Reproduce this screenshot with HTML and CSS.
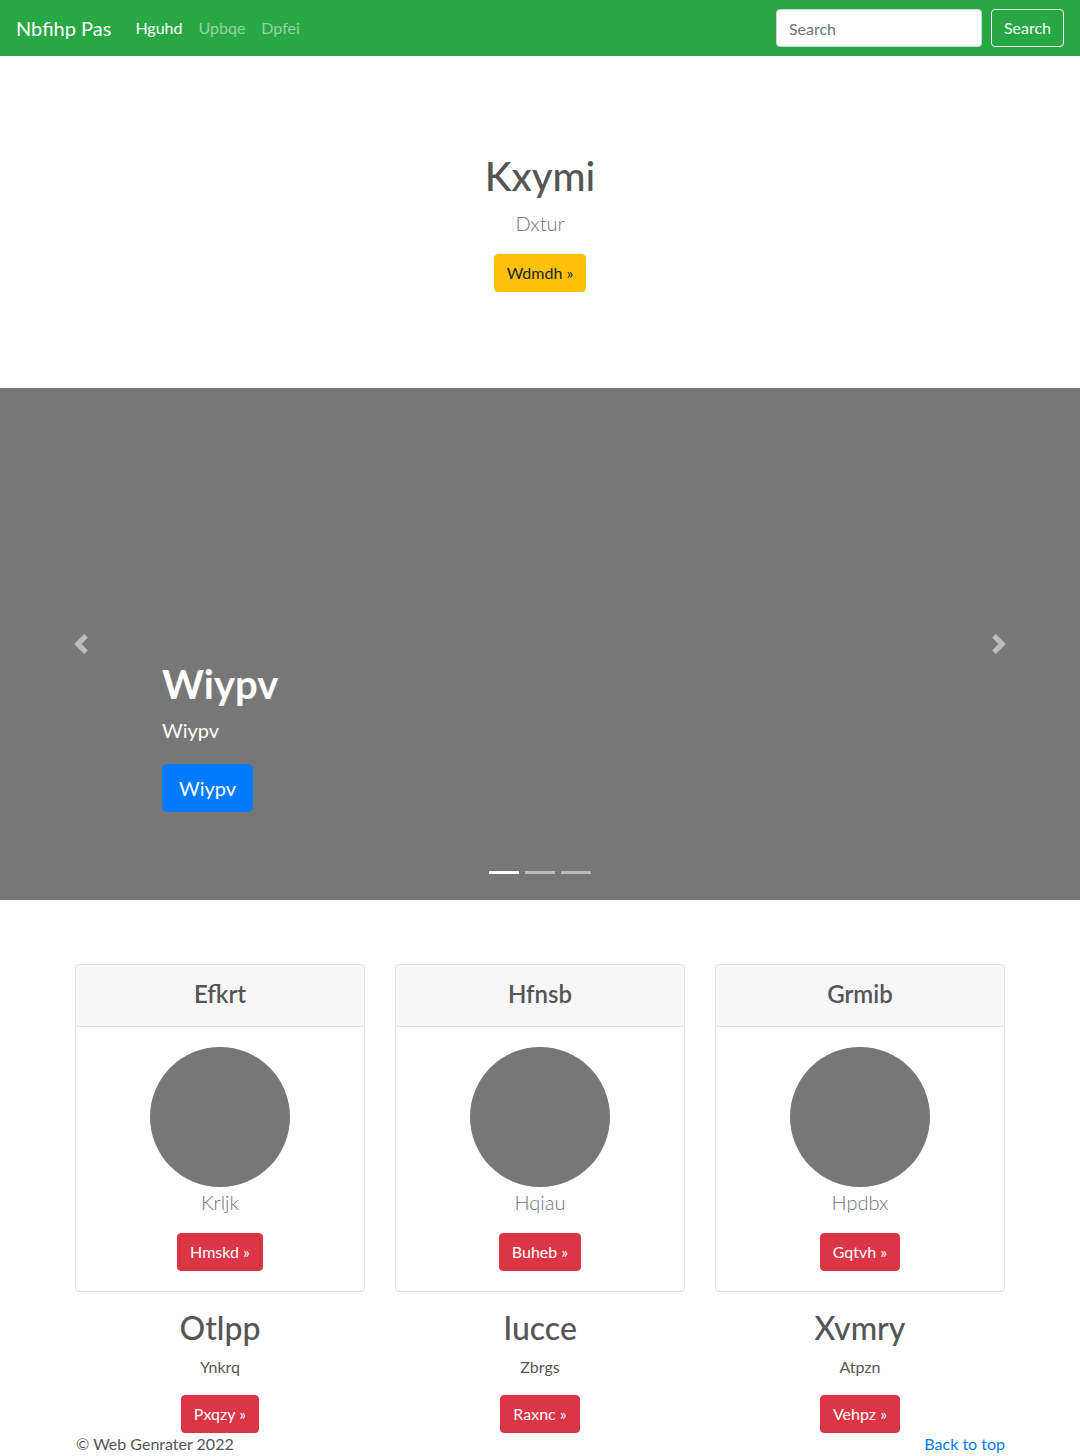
FILE: index.html
```html
<!DOCTYPE html>
<html lang="en">
<head>
<meta charset="utf-8">
<title>Nbfihp Pas</title>
<link rel="stylesheet" href="styles.css">
</head>
<body>
<header class="navbar">
  <a class="brand" href="#">Nbfihp Pas</a>
  <nav class="nav">
    <a class="nav-link active" href="#">Hguhd</a>
    <a class="nav-link" href="#">Upbqe</a>
    <a class="nav-link" href="#">Dpfei</a>
  </nav>
  <form class="search">
    <input class="search-input" type="text" placeholder="Search">
    <button class="btn btn-outline-light" type="button">Search</button>
  </form>
</header>

<section class="hero">
  <h1 class="hero-title">Kxymi</h1>
  <p class="lead muted">Dxtur</p>
  <p class="hero-actions"><a class="btn btn-warning" href="#">Wdmdh »</a></p>
</section>

<section class="carousel">
  <ol class="indicators">
    <li class="active"></li>
    <li></li>
    <li></li>
  </ol>
  <div class="slide">
    <div class="caption">
      <h1 class="caption-title">Wiypv</h1>
      <p class="caption-text">Wiypv</p>
      <p class="caption-actions"><a class="btn btn-lg btn-primary" href="#">Wiypv</a></p>
    </div>
  </div>
  <a class="control control-prev" href="#">
    <svg class="control-icon" viewBox="0 0 8 8" width="20" height="20"><path fill="#fff" d="M5.25 0l-4 4 4 4 1.5-1.5-2.5-2.5 2.5-2.5-1.5-1.5z"/></svg>
  </a>
  <a class="control control-next" href="#">
    <svg class="control-icon" viewBox="0 0 8 8" width="20" height="20"><path fill="#fff" d="M2.75 0l-1.5 1.5 2.5 2.5-2.5 2.5 1.5 1.5 4-4-4-4z"/></svg>
  </a>
</section>

<main class="container">
  <div class="row">
    <div class="col">
      <div class="card">
        <div class="card-header"><h4 class="card-title">Efkrt</h4></div>
        <div class="card-body">
          <div class="avatar"></div>
          <p class="card-text">Krljk</p>
          <a class="btn btn-danger" href="#">Hmskd »</a>
        </div>
      </div>
      <h2 class="col-title">Otlpp</h2>
      <p class="col-text">Ynkrq</p>
      <p class="col-actions"><a class="btn btn-danger" href="#">Pxqzy »</a></p>
    </div>
    <div class="col">
      <div class="card">
        <div class="card-header"><h4 class="card-title">Hfnsb</h4></div>
        <div class="card-body">
          <div class="avatar"></div>
          <p class="card-text">Hqiau</p>
          <a class="btn btn-danger" href="#">Buheb »</a>
        </div>
      </div>
      <h2 class="col-title">Iucce</h2>
      <p class="col-text">Zbrgs</p>
      <p class="col-actions"><a class="btn btn-danger" href="#">Raxnc »</a></p>
    </div>
    <div class="col">
      <div class="card">
        <div class="card-header"><h4 class="card-title">Grmib</h4></div>
        <div class="card-body">
          <div class="avatar"></div>
          <p class="card-text">Hpdbx</p>
          <a class="btn btn-danger" href="#">Gqtvh »</a>
        </div>
      </div>
      <h2 class="col-title">Xvmry</h2>
      <p class="col-text">Atpzn</p>
      <p class="col-actions"><a class="btn btn-danger" href="#">Vehpz »</a></p>
    </div>
  </div>
  <footer class="footer">
    <span class="copy">© Web Genrater 2022</span>
    <a class="back" href="#">Back to top</a>
  </footer>
</main>
</body>
</html>
```

FILE: styles.css
```css
* { box-sizing: border-box; }
html, body { margin: 0; padding: 0; }
body {
  font-family: "Segoe UI", Lato, "Noto Sans", sans-serif;
  font-size: 16px;
  line-height: 1.5;
  color: #555;
  background: #fff;
}
a { text-decoration: none; }
h1, h2, h4, p { margin: 0; }

/* navbar */
.navbar {
  height: 56px;
  background: #28a745;
  display: flex;
  align-items: center;
  padding: 0 16px;
}
.brand {
  color: #fff;
  font-size: 20px;
  line-height: 30px;
  margin-right: 16px;
}
.nav { display: flex; flex: 1; }
.nav-link {
  color: rgba(255,255,255,0.5);
  padding: 8px;
}
.nav-link.active { color: #fff; }
.search { display: flex; align-items: center; }
.search-input {
  width: 206px;
  height: 38px;
  margin-right: 9px;
  border: 1px solid #ced4da;
  border-radius: 4px;
  padding: 6px 12px;
  font: inherit;
  color: #495057;
  background: #fff;
}
.search-input::placeholder { color: #6c757d; }

/* buttons */
.btn {
  display: inline-block;
  font-family: inherit;
  font-size: 16px;
  line-height: 24px;
  padding: 6px 12px;
  border: 1px solid transparent;
  border-radius: 4px;
  background: transparent;
  cursor: pointer;
}
.btn-outline-light { color: #f8f9fa; border-color: #f8f9fa; }
.btn-warning { background: #ffc107; border-color: #ffc107; color: #212529; }
.btn-primary { background: #007bff; border-color: #007bff; color: #fff; }
.btn-danger { background: #dc3545; border-color: #dc3545; color: #fff; }
.btn-lg { font-size: 20px; line-height: 30px; padding: 8px 16px; border-radius: 5px; }

/* hero */
.hero {
  text-align: center;
  padding: 96px 0;
}
.hero-title {
  font-size: 40px;
  line-height: 48px;
  font-weight: 500;
  margin-bottom: 8px;
  color: #555;
}
.lead { font-size: 20px; line-height: 30px; font-weight: 300; }
.muted { color: #6c757d; }
.hero .lead { margin-bottom: 16px; }

/* carousel */
.carousel {
  position: relative;
  height: 512px;
  background: #777;
}
.slide { height: 100%; }
.caption {
  position: absolute;
  left: 15%;
  right: 15%;
  bottom: 48px;
  padding: 20px 0;
  color: #fff;
}
.caption-title {
  font-size: 40px;
  line-height: 48px;
  font-weight: 700;
  margin-bottom: 8px;
}
.caption-text { font-size: 20px; line-height: 28px; margin-bottom: 20px; }
.caption-actions { margin-bottom: 20px; }
.control {
  position: absolute;
  top: 0;
  bottom: 0;
  width: 15%;
  display: flex;
  align-items: center;
  justify-content: center;
  opacity: 0.5;
}
.control-prev { left: 0; }
.control-next { right: 0; }
.control-icon { display: block; }
.indicators {
  position: absolute;
  left: 0;
  right: 0;
  bottom: 0;
  margin: 0 0 16px;
  padding: 0;
  list-style: none;
  display: flex;
  justify-content: center;
}
.indicators li {
  width: 30px;
  height: 23px;
  margin: 0 3px;
  border-top: 10px solid transparent;
  border-bottom: 10px solid transparent;
  background: #fff;
  background-clip: padding-box;
  opacity: 0.5;
}
.indicators li.active { opacity: 1; }

/* columns */
.container {
  width: 960px;
  margin: 0 auto;
  padding: 64px 15px 0;
}
.row {
  display: grid;
  grid-template-columns: repeat(3, 1fr);
  column-gap: 30px;
  text-align: center;
}
.card {
  border: 1px solid #dfdfdf;
  border-radius: 4px;
  margin-bottom: 17px;
}
.card-header {
  background: #f7f7f7;
  border-bottom: 1px solid #dfdfdf;
  height: 62px;
  padding-bottom: 5px;
  display: flex;
  align-items: center;
  justify-content: center;
  border-radius: 4px 4px 0 0;
}
.card-title { font-size: 24px; line-height: 29px; font-weight: 600; color: #555; }
.card-body { padding: 20px; }
.avatar {
  width: 140px;
  height: 140px;
  border-radius: 50%;
  background: #777;
  margin: 0 auto;
}
.card-text {
  font-size: 20px;
  line-height: 30px;
  font-weight: 300;
  color: #6c757d;
  margin-bottom: 16px;
}
.col-title {
  font-size: 32px;
  line-height: 38px;
  font-weight: 500;
  margin-bottom: 8px;
  color: #555;
}
.col-text { margin-bottom: 16px; font-size: 16px; }
.col-actions { margin: 0; }

.footer {
  display: flex;
  justify-content: space-between;
  line-height: 24px;
  margin-top: -1px;
}
.copy { color: #555; padding-left: 1px; }
.back { color: #007bff; }
```
